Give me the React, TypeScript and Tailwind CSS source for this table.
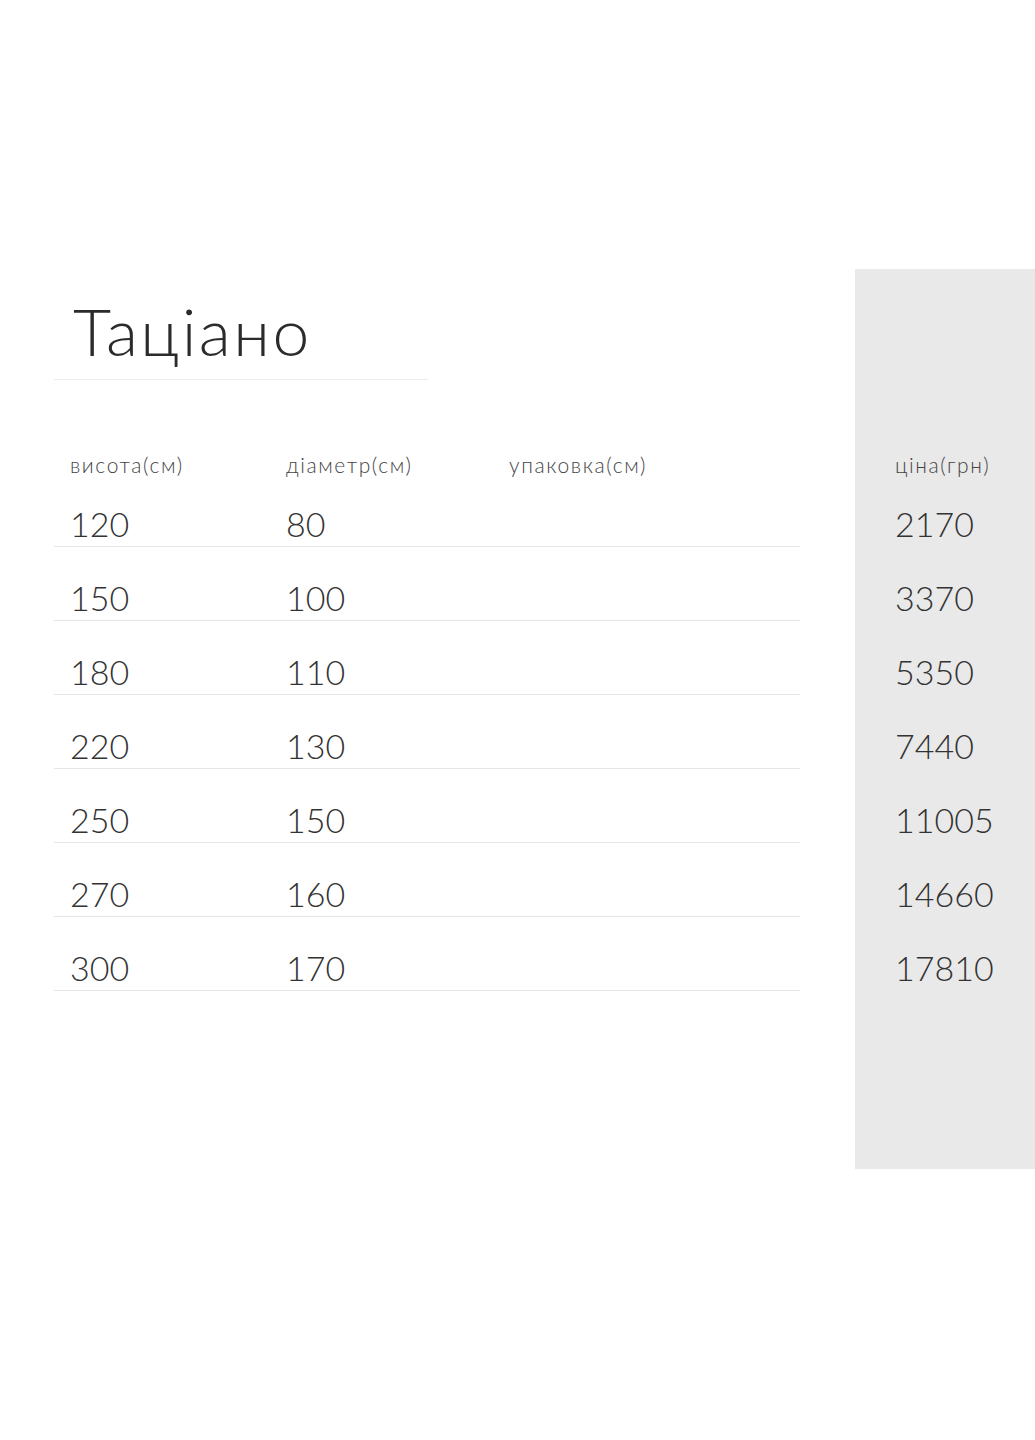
const rows = [
  { h: '120', d: '80', p: '2170' },
  { h: '150', d: '100', p: '3370' },
  { h: '180', d: '110', p: '5350' },
  { h: '220', d: '130', p: '7440' },
  { h: '250', d: '150', p: '11005' },
  { h: '270', d: '160', p: '14660' },
  { h: '300', d: '170', p: '17810' },
];

const font = { fontFamily: 'Lato, "Noto Sans", sans-serif' };

export default function App() {
  return (
    <div className="min-h-[1440px] bg-white text-[#333]" style={font}>
      <div className="h-[269px]" />
      <div className="flex">
        <div className="w-[855px] pl-[54px]">
          <div className="h-[111px] w-[374px] border-b border-[#ededed] pl-[19px] pt-[22px]">
            <h1 className="text-[66px] font-light leading-[80px] tracking-[2.5px] text-[#2b2b2b]">Таціано</h1>
          </div>
          <div className="flex h-[97px] items-end pl-[16px] text-[21px] font-light leading-[24px] tracking-[1.6px] text-[#444]">
            <div className="w-[216px]">висота(см)</div>
            <div className="w-[223px]">діаметр(см)</div>
            <div>упаковка(см)</div>
          </div>
          {rows.map((r, i) => (
            <div
              key={r.h}
              className={`flex w-[746px] items-end border-b border-[#e6e6e6] pb-[4px] pl-[16px] text-[34px] font-light leading-[36px] ${i === 0 ? 'h-[70px]' : 'h-[74px]'}`}
            >
              <div className="w-[216px]">{r.h}</div>
              <div>{r.d}</div>
            </div>
          ))}
        </div>
        <div className="h-[900px] w-[180px] bg-[#e9e9e9] pl-[40px]">
          <div className="h-[111px]" />
          <div className="flex h-[97px] items-end text-[21px] font-light leading-[24px] tracking-[1.6px] text-[#444]">ціна(грн)</div>
          {rows.map((r, i) => (
            <div
              key={r.p}
              className={`flex items-end border-b border-transparent pb-[4px] text-[34px] font-light leading-[36px] ${i === 0 ? 'h-[70px]' : 'h-[74px]'}`}
            >
              {r.p}
            </div>
          ))}
        </div>
      </div>
    </div>
  );
}
